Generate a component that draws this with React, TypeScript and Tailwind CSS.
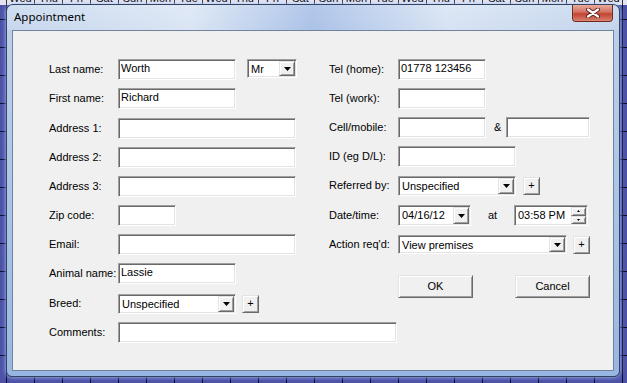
import React from 'react'

const DAYS = ['Wed', 'Thu', 'Fri', 'Sat', 'Sun', 'Mon', 'Tue']

// classic win32 3D borders
const sunken =
  'bg-white border border-t-[#a0a0a0] border-l-[#a0a0a0] border-b-white border-r-white shadow-[inset_1px_1px_0_#696969,inset_-1px_-1px_0_#e3e3e3]'
const raised =
  'bg-[#f0f0f0] border border-t-[#e3e3e3] border-l-[#e3e3e3] border-b-[#696969] border-r-[#696969] shadow-[inset_1px_1px_0_#ffffff,inset_-1px_-1px_0_#a0a0a0]'

function Label({ children }: { children: React.ReactNode }) {
  return <span className="w-[69px] shrink-0">{children}</span>
}

function TextBox({ w, value }: { w: string; value?: string }) {
  return <div className={`${w} h-[21px] shrink-0 pl-[2px] leading-[17px] ${sunken}`}>{value}</div>
}

function Arrow() {
  return (
    <svg width="7" height="4" viewBox="0 0 7 4">
      <polygon points="0,0 7,0 3.5,4" fill="#000" />
    </svg>
  )
}

function Combo({ w, h, value }: { w: string; h: string; value: string }) {
  return (
    <div className={`${w} ${h} shrink-0 flex p-[1px] ${sunken}`}>
      <div className="flex-1 pl-[2px] leading-[16px] whitespace-nowrap overflow-hidden">{value}</div>
      <div className={`w-[16px] h-full flex items-center justify-center ${raised}`}>
        <Arrow />
      </div>
    </div>
  )
}

function Plus() {
  return (
    <div className={`w-[17px] h-[18px] shrink-0 flex items-center justify-center text-[11px] leading-none ${raised}`}>
      +
    </div>
  )
}

function Spinner() {
  return (
    <div className="w-[15px] h-full flex flex-col">
      <div className={`flex-1 flex items-center justify-center ${raised}`}>
        <svg width="3" height="2" viewBox="0 0 3 2">
          <polygon points="1.5,0 3,2 0,2" fill="#000" />
        </svg>
      </div>
      <div className={`flex-1 flex items-center justify-center ${raised}`}>
        <svg width="3" height="2" viewBox="0 0 3 2">
          <polygon points="0,0 3,0 1.5,2" fill="#000" />
        </svg>
      </div>
    </div>
  )
}

function Button({ children }: { children: React.ReactNode }) {
  return (
    <div className={`w-[75px] h-[23px] flex items-center justify-center ${raised}`}>{children}</div>
  )
}

export default function App() {
  return (
    <div className="relative w-[627px] h-[383px] overflow-hidden bg-[#4d52a6] bg-[repeating-linear-gradient(90deg,transparent_0px,transparent_6px,#0b0b30_6px,#0b0b30_7px,transparent_7px,transparent_28px),repeating-linear-gradient(180deg,transparent_0px,transparent_19px,#0b0b30_19px,#0b0b30_20px,transparent_20px,transparent_28px)] font-['Liberation_Sans',Arial,sans-serif] text-[11px] text-black">
      {/* calendar header peeking out behind the dialog */}
      <div className="h-[5px] overflow-hidden bg-[#e4e4f0]">
        <div className="flex -mt-[8px] ml-[6px]">
          {Array.from({ length: 23 }).map((_, i) => (
            <div key={i} className="w-[28px] h-[13px] shrink-0 border-l border-[#333] text-center leading-[13px]">
              {DAYS[i % 7]}
            </div>
          ))}
        </div>
      </div>

      {/* dialog window */}
      <div className="absolute left-[6px] top-[4px] w-[614px] h-[373px] flex flex-col rounded-t-[7px] rounded-b-[6px] border border-[#34445f] bg-[linear-gradient(180deg,#c7d8ef_0px,#bccfea_26px,#a9c3e6_60%,#98b6e2_100%)] shadow-[0_0_4px_#a9c6ff]">
        <div className="h-[25px] flex rounded-t-[6px] bg-[linear-gradient(90deg,rgba(255,255,255,0.15),rgba(255,255,255,0.45)_30%,rgba(140,170,225,0.35)_50%,rgba(255,255,255,0.4)_72%,rgba(255,255,255,0.1))]">
          <span className="self-center pl-[7px] pb-[1px] font-['Noto_Sans',sans-serif] text-[11.5px] text-black">
            Appointment
          </span>
          <div className="ml-auto mr-[6px] w-[41px] h-[17px] rounded-b-[4px] border border-t-0 border-[#6a2c22] bg-[linear-gradient(180deg,#e8a99b_0%,#d27061_45%,#c2412f_55%,#d9806f_100%)] shadow-[inset_0_0_1px_#ffd0c8] flex items-center justify-center">
            <svg width="14" height="10" viewBox="0 0 14 10">
              <path d="M2 1.5 L12 8.5 M12 1.5 L2 8.5" stroke="#5a1e18" strokeWidth="4" strokeLinecap="round" />
              <path d="M2 1.5 L12 8.5 M12 1.5 L2 8.5" stroke="#ffffff" strokeWidth="2.2" strokeLinecap="round" />
            </svg>
          </div>
        </div>

        <div className="flex-1 mx-[5px] mb-[5px] border border-[#71829c] bg-[#f0f0f0] pt-[28px] pl-[36px]">
          <div className="flex">
            {/* left column */}
            <div className="w-[280px] flex flex-col gap-[8px]">
              <div className="h-[21px] flex items-center">
                <Label>Last name:</Label>
                <TextBox w="w-[118px]" value="Worth" />
                <div className="ml-[11px] self-start">
                  <Combo w="w-[50px]" h="h-[19px]" value="Mr" />
                </div>
              </div>
              <div className="h-[21px] flex items-center">
                <Label>First name:</Label>
                <TextBox w="w-[118px]" value="Richard" />
              </div>
              <div className="h-[21px] mt-[1px] flex items-center">
                <Label>Address 1:</Label>
                <TextBox w="w-[178px]" />
              </div>
              <div className="h-[21px] flex items-center">
                <Label>Address 2:</Label>
                <TextBox w="w-[178px]" />
              </div>
              <div className="h-[21px] flex items-center">
                <Label>Address 3:</Label>
                <TextBox w="w-[178px]" />
              </div>
              <div className="h-[21px] flex items-center">
                <Label>Zip code:</Label>
                <TextBox w="w-[58px]" />
              </div>
              <div className="h-[21px] flex items-center">
                <Label>Email:</Label>
                <TextBox w="w-[178px]" />
              </div>
              <div className="h-[21px] flex items-center">
                <Label>Animal name:</Label>
                <TextBox w="w-[118px]" value="Lassie" />
              </div>
              <div className="h-[21px] mt-[1px] flex items-center">
                <Label>Breed:</Label>
                <Combo w="w-[118px]" h="h-[20px]" value="Unspecified" />
                <div className="ml-[6px]">
                  <Plus />
                </div>
              </div>
            </div>

            {/* right column */}
            <div className="flex flex-col gap-[8px]">
              <div className="h-[21px] flex items-center">
                <Label>Tel (home):</Label>
                <TextBox w="w-[88px]" value="01778 123456" />
              </div>
              <div className="h-[21px] flex items-center">
                <Label>Tel (work):</Label>
                <TextBox w="w-[88px]" />
              </div>
              <div className="h-[21px] flex items-center">
                <Label>Cell/mobile:</Label>
                <TextBox w="w-[88px]" />
                <span className="w-[20px] pl-[8px]">&amp;</span>
                <TextBox w="w-[84px]" />
              </div>
              <div className="h-[21px] flex items-center">
                <Label>ID (eg D/L):</Label>
                <TextBox w="w-[118px]" />
              </div>
              <div className="h-[21px] flex items-center">
                <Label>Referred by:</Label>
                <Combo w="w-[118px]" h="h-[20px]" value="Unspecified" />
                <div className="ml-[7px]">
                  <Plus />
                </div>
              </div>
              <div className="h-[21px] mt-[1px] flex items-center">
                <Label>Date/time:</Label>
                <Combo w="w-[73px]" h="h-[21px]" value="04/16/12" />
                <span className="w-[43px] text-center">at</span>
                <div className={`w-[74px] h-[21px] flex p-[1px] ${sunken}`}>
                  <div className="flex-1 pl-[2px] leading-[16px]">03:58 PM</div>
                  <Spinner />
                </div>
              </div>
              <div className="h-[21px] flex items-center">
                <Label>Action req'd:</Label>
                <Combo w="w-[169px]" h="h-[19px]" value="View premises" />
                <div className="ml-[6px]">
                  <Plus />
                </div>
              </div>
              <div className="mt-[12px] flex">
                <div className="w-[69px]" />
                <Button>OK</Button>
                <div className="w-[42px]" />
                <Button>Cancel</Button>
              </div>
            </div>
          </div>

          <div className="mt-[8px] h-[21px] flex items-center">
            <Label>Comments:</Label>
            <TextBox w="w-[279px]" />
          </div>
        </div>
      </div>
    </div>
  )
}
